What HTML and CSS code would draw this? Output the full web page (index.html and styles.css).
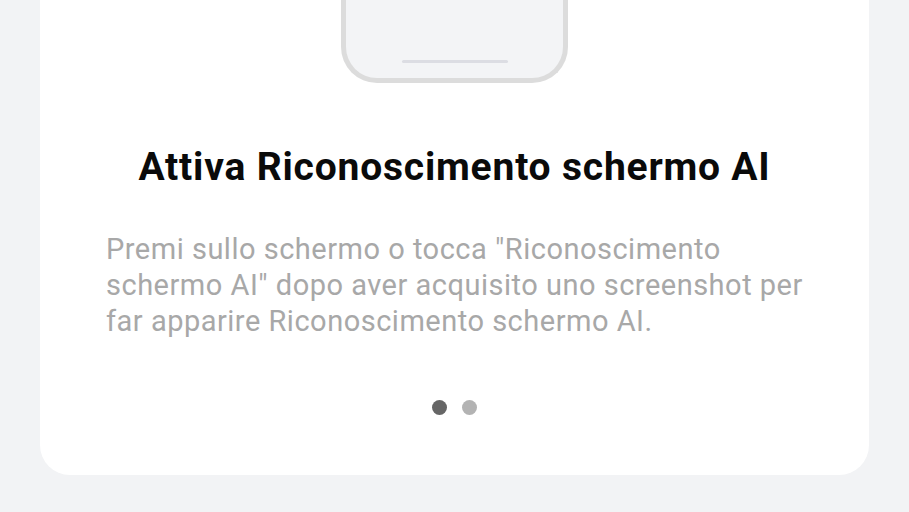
FILE: index.html
```html
<!DOCTYPE html>
<html lang="it">
<head>
<meta charset="utf-8">
<link rel="stylesheet" href="styles.css">
</head>
<body>
<div class="card">
  <div class="phone"><div class="home-bar"></div></div>
  <h1 class="title">Attiva Riconoscimento schermo AI</h1>
  <p class="desc">Premi sullo schermo o tocca "Riconoscimento schermo AI" dopo aver acquisito uno screenshot per far apparire Riconoscimento schermo AI.</p>
  <div class="dots"><span class="dot active"></span><span class="dot"></span></div>
</div>
</body>
</html>
```
FILE: styles.css
```css
html, body {
  margin: 0;
  padding: 0;
  background: #f2f3f5;
  font-family: Roboto, "Noto Sans", sans-serif;
}
body {
  width: 909px;
  height: 512px;
  overflow: hidden;
}
.card {
  margin: 0 40px;
  height: 475px;
  background: #ffffff;
  border-radius: 0 0 30px 30px;
  display: flex;
  flex-direction: column;
  align-items: center;
  padding: 0 66px;
  box-sizing: border-box;
}
.phone {
  width: 227px;
  height: 83px;
  box-sizing: border-box;
  border: 5px solid #dcdcdc;
  border-top: none;
  border-radius: 0 0 36px 36px;
  background: #f3f4f6;
  display: flex;
  justify-content: center;
  align-items: flex-end;
  padding-bottom: 15px;
}
.home-bar {
  width: 106px;
  height: 3px;
  border-radius: 2px;
  background: #dcdde3;
}
.title {
  margin: 60px 0 0;
  font-size: 39px;
  font-weight: 700;
  color: #0a0a0a;
  line-height: 48px;
  white-space: nowrap;
  letter-spacing: 0.8px;
}
.desc {
  margin: 40px 0 0;
  align-self: stretch;
  font-size: 29px;
  line-height: 36px;
  color: #a8a8a8;
  letter-spacing: 0.5px;
}
.dots {
  margin-top: 61px;
  display: flex;
  gap: 15px;
}
.dot {
  width: 15px;
  height: 15px;
  border-radius: 50%;
  background: #b3b3b3;
}
.dot.active {
  background: #666666;
}
```
